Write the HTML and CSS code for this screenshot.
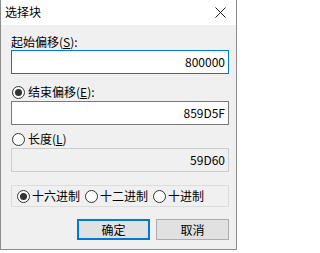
FILE: index.html
```html
<!DOCTYPE html>
<html>
<head>
<meta charset="utf-8">
<link rel="stylesheet" href="styles.css">
</head>
<body>
<div class="window">
  <div class="titlebar">
    <span class="title">选择块</span>
    <svg class="close" width="11" height="11" viewBox="0 0 11 11"><path d="M0.5 0.5 L10.5 10.5 M10.5 0.5 L0.5 10.5" stroke="#1a1a1a" stroke-width="1" fill="none"/></svg>
  </div>
  <div class="content">
    <div class="label first">起始偏移(<u>S</u>):</div>
    <div class="field focused">800000</div>

    <div class="radio-row r2">
      <svg class="radio" width="13" height="13" viewBox="0 0 13 13"><circle cx="6.5" cy="6.5" r="6" fill="#fff" stroke="#333"/><circle cx="6.5" cy="6.5" r="3.5" fill="#333"/></svg>
      <span>结束偏移(<u>E</u>):</span>
    </div>
    <div class="field">859D5F</div>

    <div class="radio-row r3">
      <svg class="radio" width="13" height="13" viewBox="0 0 13 13"><circle cx="6.5" cy="6.5" r="6" fill="#fff" stroke="#333"/></svg>
      <span>长度(<u>L</u>)</span>
    </div>
    <div class="field disabled">59D60</div>

    <div class="group">
      <div class="opt">
        <svg class="radio" width="13" height="13" viewBox="0 0 13 13"><circle cx="6.5" cy="6.5" r="6" fill="#fff" stroke="#333"/><circle cx="6.5" cy="6.5" r="3.5" fill="#333"/></svg>
        <span>十六进制</span>
      </div>
      <div class="opt">
        <svg class="radio" width="13" height="13" viewBox="0 0 13 13"><circle cx="6.5" cy="6.5" r="6" fill="#fff" stroke="#333"/></svg>
        <span>十二进制</span>
      </div>
      <div class="opt">
        <svg class="radio" width="13" height="13" viewBox="0 0 13 13"><circle cx="6.5" cy="6.5" r="6" fill="#fff" stroke="#333"/></svg>
        <span>十进制</span>
      </div>
    </div>

    <div class="buttons">
      <div class="btn default">确定</div>
      <div class="btn">取消</div>
    </div>
  </div>
</div>
</body>
</html>
```
FILE: styles.css
```css
html, body {
  margin: 0;
  padding: 0;
  background: #ffffff;
}
body {
  font-family: "Noto Sans CJK SC", "Noto Sans", sans-serif;
  font-size: 12px;
  color: #000;
}
.window {
  width: 237px;
  height: 250px;
  box-sizing: border-box;
  border: 1px solid #8c8c8c;
  border-top: none;
  background: #f0f0f0;
  display: flex;
  flex-direction: column;
}
.titlebar {
  height: 25px;
  background: #ffffff;
  display: flex;
  align-items: center;
  justify-content: space-between;
  padding: 0 10px 0 4px;
  flex-shrink: 0;
}
.title {
  line-height: 16px;
  margin-top: -1px;
}
.close {
  display: block;
  margin-top: -1px;
}
.content {
  padding: 0 7px 0 10px;
  display: flex;
  flex-direction: column;
}
u {
  text-decoration: underline;
  text-underline-offset: 1px;
}
.label {
  line-height: 16px;
  height: 16px;
}
.label.first {
  margin-top: 9px;
}
.field {
  height: 24px;
  box-sizing: border-box;
  border: 1px solid #7a7a7a;
  background: #fff;
  text-align: right;
  padding: 0 3px;
  line-height: 22px;
}
.field.focused {
  border-color: #0078d7;
}
.field.disabled {
  background: #f0f0f0;
  border-color: #cccccc;
}
.radio-row {
  display: flex;
  align-items: center;
  height: 16px;
  line-height: 16px;
  padding-left: 1px;
  margin-bottom: 1px;
}
.radio-row .radio {
  margin-right: 3px;
  display: block;
}
.r2 {
  margin-top: 10px;
}
.r3 {
  margin-top: 6px;
}
.group {
  margin-top: 13px;
  height: 22px;
  box-sizing: border-box;
  border: 1px solid #dcdcdc;
  display: flex;
  align-items: center;
  padding-left: 5px;
}
.opt {
  display: flex;
  align-items: center;
  line-height: 16px;
  margin-right: 5px;
}
.opt .radio {
  display: block;
  margin-right: 2px;
}
.buttons {
  margin-top: 12px;
  display: flex;
  justify-content: flex-end;
  gap: 6px;
}
.btn {
  width: 73px;
  height: 21px;
  box-sizing: border-box;
  border: 1px solid #adadad;
  background: #e1e1e1;
  text-align: center;
  line-height: 19px;
}
.btn.default {
  border-color: #0078d7;
  box-shadow: inset 0 0 0 1px #0078d7;
}
```
